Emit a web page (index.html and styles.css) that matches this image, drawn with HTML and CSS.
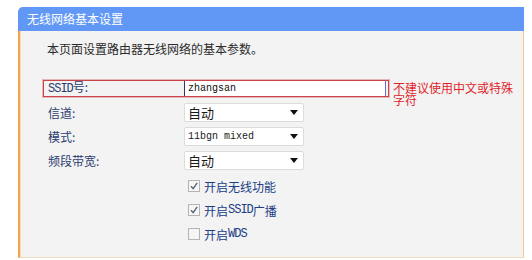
FILE: index.html
```html
<!DOCTYPE html>
<html lang="zh-CN">
<head>
  <meta charset="UTF-8" />
  <title>无线网络基本设置</title>
  <link rel="stylesheet" href="styles.css">
</head>
<body>
  <div class="panel">
    <div class="panelHead">无线网络基本设置</div>
    <div class="panelBody">
      <p class="intro">本页面设置路由器无线网络的基本参数。</p>

      <div class="form">
        <div class="row">
          <div class="ssidBox">
            <span class="label"><span class="lat">SSID</span>号:</span>
            <input class="textInput" type="text" value="zhangsan">
          </div>
          <span class="hint">不建议使用中文或特殊字符</span>
        </div>

        <div class="row">
          <div class="field">
            <span class="label">信道:</span>
            <div class="select"><span>自动</span><i class="arrow"></i></div>
          </div>
        </div>

        <div class="row">
          <div class="field">
            <span class="label">模式:</span>
            <div class="select"><span class="val">11bgn mixed</span><i class="arrow"></i></div>
          </div>
        </div>

        <div class="row">
          <div class="field">
            <span class="label">频段带宽:</span>
            <div class="select"><span>自动</span><i class="arrow"></i></div>
          </div>
        </div>

        <div class="checks">
          <label class="check">
            <span class="box"><svg viewBox="0 0 10 10" width="10" height="10"><path d="M2 5.2 L4.2 7.6 L8.2 1.8" fill="none" stroke="#55637d" stroke-width="1.4"/></svg></span>
            开启无线功能
          </label>
          <label class="check">
            <span class="box"><svg viewBox="0 0 10 10" width="10" height="10"><path d="M2 5.2 L4.2 7.6 L8.2 1.8" fill="none" stroke="#55637d" stroke-width="1.4"/></svg></span>
            开启<span class="lat">SSID</span>广播
          </label>
          <label class="check">
            <span class="box"></span>
            开启<span class="lat">WDS</span>
          </label>
        </div>
      </div>
    </div>
  </div>
</body>
</html>
```

FILE: styles.css
```css
* {
  box-sizing: border-box;
  margin: 0;
  padding: 0;
}

body {
  background: #ffffff;
  font-family: "Noto Sans CJK SC", "DejaVu Sans", sans-serif;
  font-size: 12px;
}

.panel {
  margin: 7px 0 0 18px;
  width: 506px;
}

.panelHead {
  height: 24px;
  line-height: 24px;
  padding-left: 9px;
  background: #6198f5;
  border-top-left-radius: 5px;
  color: #ffffff;
  font-size: 12px;
}

.panelBody {
  height: 227px;
  background: #f3f3f3;
  border-left: 2px solid #f4a54c;
  border-right: 1px solid #f0c990;
  border-bottom: 1px solid #eedbbd;
  box-shadow: inset 1px 0 0 #fad9b0;
  padding-left: 27px;
}

.intro {
  padding-top: 10px;
  line-height: 16px;
  color: #2b2b2b;
}

.form {
  margin-top: 19px;
  margin-left: -4px;
}

/* latin bits in labels look like the old bitmap font */
.lat {
  font-family: "Liberation Mono", monospace;
  font-size: 12px;
  letter-spacing: -1px;
}

.row {
  display: flex;
  align-items: center;
  height: 24px;
}

.label {
  width: 140px;
  padding-left: 4px;
  color: #2c3c6e;
  line-height: 15px;
}

.ssidBox, .field {
  display: flex;
  align-items: center;
  border: 1px solid transparent;
}

.ssidBox {
  width: 346px;
  height: 17px;
  border-color: #c8434a;
  box-shadow: 0 0 0 1px rgba(214, 110, 116, 0.45);
}

.textInput {
  width: 202px;
  height: 15px;
  border: none;
  border-left: 1px solid #2f3670;
  border-right: 1px solid #6a6ad0;
  background: #ffffff;
  padding-left: 3px;
  font-family: "Liberation Mono", monospace;
  font-size: 10px;
  color: #111111;
  outline: none;
}

.hint {
  align-self: flex-start;
  margin-top: 6px;
  margin-left: 4px;
  width: 122px;
  line-height: 12px;
  color: #e0262b;
}

.select {
  display: flex;
  align-items: center;
  justify-content: space-between;
  width: 120px;
  height: 19px;
  background: #ffffff;
  border: 1px solid #dcdcdc;
  border-radius: 2px;
  padding: 0 5px 0 3px;
  color: #1a1a1a;
  font-size: 13px;
}

.select .val {
  font-family: "Liberation Mono", monospace;
  font-size: 10px;
}

.arrow {
  width: 0;
  height: 0;
  border-left: 4px solid transparent;
  border-right: 4px solid transparent;
  border-top: 5px solid #111111;
}

.checks {
  margin-top: 2px;
  padding-left: 145px;
}

.check {
  display: flex;
  align-items: center;
  height: 24px;
  color: #203e86;
  font-size: 12px;
}

.box {
  display: flex;
  align-items: center;
  justify-content: center;
  width: 12px;
  height: 12px;
  margin-right: 4px;
  background: #f6f6f6;
  border: 1px solid #b4b4b4;
}
```
